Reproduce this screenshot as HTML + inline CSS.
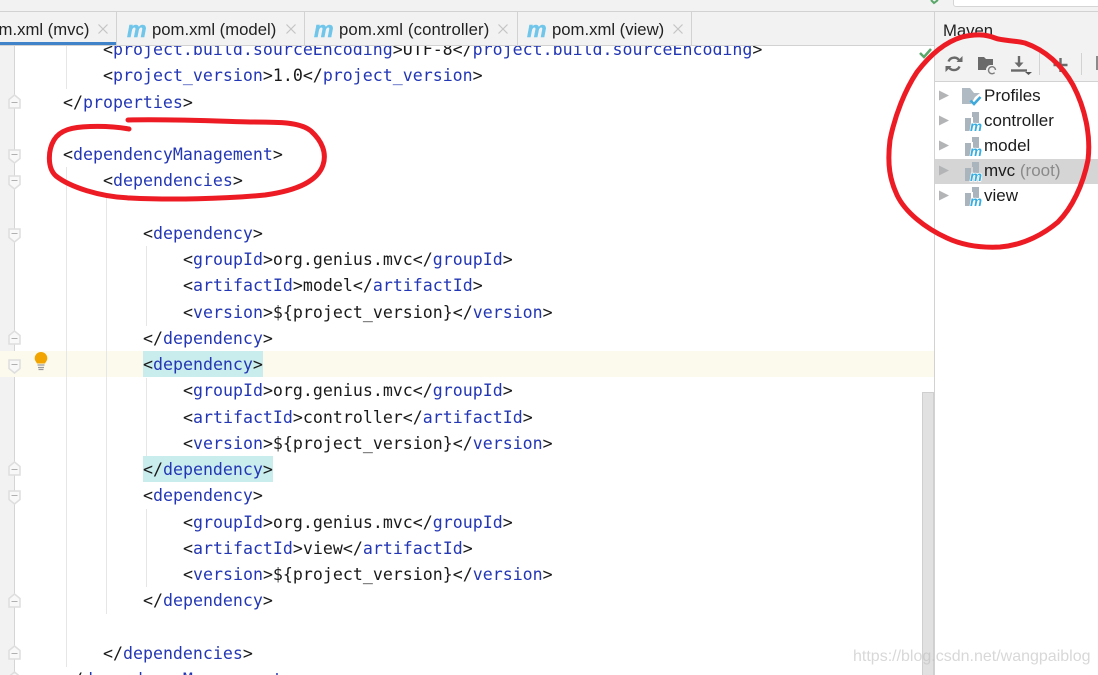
<!DOCTYPE html>
<html><head><meta charset="utf-8">
<style>
html,body{margin:0;padding:0;width:1098px;height:675px;overflow:hidden;background:#fff}
#r{position:relative;width:1098px;height:675px;overflow:hidden;background:#fff}
.a{position:absolute}
.l{position:absolute;height:26px;margin-top:1px;line-height:26px;font-family:"DejaVu Sans Mono","Liberation Mono",monospace;font-size:16.6px;color:#1a1a1a;white-space:pre}
.l b{font-weight:normal;color:#2337b4}
.t{position:absolute;top:12px;height:33px;line-height:36px;font-family:"Liberation Sans",sans-serif;font-size:16.7px;color:#222;white-space:pre}
.m{position:absolute;top:12px;font:italic bold 22px/35px "Liberation Sans",sans-serif;color:#6fc6ea;-webkit-text-stroke:.5px #6fc6ea}
.x{position:absolute;top:24px}
.n{position:absolute;left:984px;height:25px;line-height:25px;font-family:"Liberation Sans",sans-serif;font-size:17px;color:#1c1c1c;white-space:pre}
.g{position:absolute;width:1px;background:#e6e6e6}
</style></head><body><div id="r">

<!-- gutter and caret row -->
<div class="a" style="left:0;top:45px;width:14px;height:630px;background:#f2f2f2"></div>
<div class="a" style="left:14px;top:45px;width:1px;height:630px;background:#d5d5d5"></div>
<div class="a" style="left:0;top:351px;width:935px;height:26px;background:#fcfaed"></div>
<div class="a" style="left:143px;top:351px;width:120px;height:26px;background:#c9ecec"></div>
<div class="a" style="left:143px;top:456px;width:130px;height:26px;background:#c9ecec"></div>

<!-- indent guides -->
<div class="g" style="left:66px;top:45px;height:44px"></div>
<div class="g" style="left:66px;top:167px;height:500px"></div>
<div class="g" style="left:106px;top:194px;height:420px"></div>
<div class="g" style="left:146px;top:246px;height:80px"></div>
<div class="g" style="left:146px;top:378px;height:78px"></div>
<div class="g" style="left:146px;top:509px;height:78px"></div>

<!-- code -->
<div class="l" style="left:103px;top:36px">&lt;<b>project.build.sourceEncoding</b>&gt;UTF-8&lt;/<b>project.build.sourceEncoding</b>&gt;</div>
<div class="l" style="left:103px;top:62px">&lt;<b>project_version</b>&gt;1.0&lt;/<b>project_version</b>&gt;</div>
<div class="l" style="left:63px;top:89px">&lt;/<b>properties</b>&gt;</div>
<div class="l" style="left:63px;top:141px">&lt;<b>dependencyManagement</b>&gt;</div>
<div class="l" style="left:103px;top:167px">&lt;<b>dependencies</b>&gt;</div>
<div class="l" style="left:143px;top:220px">&lt;<b>dependency</b>&gt;</div>
<div class="l" style="left:183px;top:246px">&lt;<b>groupId</b>&gt;org.genius.mvc&lt;/<b>groupId</b>&gt;</div>
<div class="l" style="left:183px;top:272px">&lt;<b>artifactId</b>&gt;model&lt;/<b>artifactId</b>&gt;</div>
<div class="l" style="left:183px;top:299px">&lt;<b>version</b>&gt;${project_version}&lt;/<b>version</b>&gt;</div>
<div class="l" style="left:143px;top:325px">&lt;/<b>dependency</b>&gt;</div>
<div class="l" style="left:143px;top:351px">&lt;<b>dependency</b>&gt;</div>
<div class="l" style="left:183px;top:377px">&lt;<b>groupId</b>&gt;org.genius.mvc&lt;/<b>groupId</b>&gt;</div>
<div class="l" style="left:183px;top:404px">&lt;<b>artifactId</b>&gt;controller&lt;/<b>artifactId</b>&gt;</div>
<div class="l" style="left:183px;top:430px">&lt;<b>version</b>&gt;${project_version}&lt;/<b>version</b>&gt;</div>
<div class="l" style="left:143px;top:456px">&lt;/<b>dependency</b>&gt;</div>
<div class="l" style="left:143px;top:482px">&lt;<b>dependency</b>&gt;</div>
<div class="l" style="left:183px;top:509px">&lt;<b>groupId</b>&gt;org.genius.mvc&lt;/<b>groupId</b>&gt;</div>
<div class="l" style="left:183px;top:535px">&lt;<b>artifactId</b>&gt;view&lt;/<b>artifactId</b>&gt;</div>
<div class="l" style="left:183px;top:561px">&lt;<b>version</b>&gt;${project_version}&lt;/<b>version</b>&gt;</div>
<div class="l" style="left:143px;top:587px">&lt;/<b>dependency</b>&gt;</div>
<div class="l" style="left:103px;top:640px">&lt;/<b>dependencies</b>&gt;</div>
<div class="l" style="left:63px;top:666px">&lt;/<b>dependencyManagement</b>&gt;</div>

<!-- fold markers -->
<svg class="a" style="left:0;top:0" width="40" height="675">
<defs>
<g id="u"><path d="M1 14V5.500L6.500 1 12 5.500V14z" fill="#f8f8f8" stroke="#dedede" stroke-width="1.500"/><path d="M3.500 8.500h6" stroke="#b0b0b0"/></g>
<g id="d"><path d="M1 1v8.500L6.500 14 12 9.500V1z" fill="#f8f8f8" stroke="#dedede" stroke-width="1.500"/><path d="M3.500 5.500h6" stroke="#b0b0b0"/></g>
</defs>
<use href="#u" x="8" y="94"/>
<use href="#d" x="8" y="149"/>
<use href="#d" x="8" y="175"/>
<use href="#d" x="8" y="228"/>
<use href="#u" x="8" y="330"/>
<use href="#d" x="8" y="359"/>
<use href="#u" x="8" y="461"/>
<use href="#d" x="8" y="490"/>
<use href="#u" x="8" y="593"/>
<use href="#u" x="8" y="645"/>
<use href="#u" x="8" y="671"/>
</svg>

<!-- bulb -->
<svg class="a" style="left:33px;top:351px" width="16" height="20">
<path d="M8 1a6.300 6.300 0 0 0-6.300 6.300c0 2.400 1.500 3.600 2.300 5.200h8c.8-1.600 2.300-2.800 2.300-5.200A6.300 6.300 0 0 0 8 1z" fill="#f2a500"/>
<path d="M4.500 14h7M5 16.500h6M5.500 18.500h5" stroke="#9a9a9a" stroke-width="1.300"/>
</svg>

<!-- editor scrollbar -->
<div class="a" style="left:922px;top:392px;width:10px;height:283px;background:#e1e1e1;border:1px solid #cfcfcf;border-bottom:0"></div>

<!-- top bar -->
<div class="a" style="left:0;top:0;width:1098px;height:11px;background:#f2f2f2"></div>
<div class="a" style="left:0;top:11px;width:1098px;height:1px;background:#d2d2d2"></div>
<div class="a" style="left:953px;top:-6px;width:145px;height:11px;background:#fff;border:1px solid #d5d5d5;border-radius:3px"></div>
<svg class="a" style="left:930px;top:0" width="10" height="5"><path d="M1 0l3 3 4-3" stroke="#59a869" stroke-width="2" fill="none"/></svg>

<!-- tabs -->
<div class="a" style="left:0;top:12px;width:935px;height:33px;background:#f2f2f2"></div>
<div class="a" style="left:0;top:45px;width:935px;height:1px;background:#d2d2d2"></div>
<div class="a" style="left:0;top:42px;width:117px;height:3px;background:#4083c9"></div>
<div class="a" style="left:116px;top:12px;width:1px;height:33px;background:#d2d2d2"></div>
<div class="a" style="left:304px;top:12px;width:1px;height:33px;background:#d2d2d2"></div>
<div class="a" style="left:517px;top:12px;width:1px;height:33px;background:#d2d2d2"></div>
<div class="a" style="left:691px;top:12px;width:1px;height:33px;background:#d2d2d2"></div>

<div class="t" style="left:-20px">pom.xml (mvc)</div>
<div class="m" style="left:127px">m</div>
<div class="t" style="left:152px">pom.xml (model)</div>
<div class="m" style="left:314px">m</div>
<div class="t" style="left:339px;letter-spacing:.15px">pom.xml (controller)</div>
<div class="m" style="left:527px">m</div>
<div class="t" style="left:552px">pom.xml (view)</div>
<svg class="x" style="left:98px" width="10" height="10"><path d="M.5.5l9 9M9.500.5l-9 9" stroke="#c4c4c4" stroke-width="1.200"/></svg>
<svg class="x" style="left:286px" width="10" height="10"><path d="M.5.5l9 9M9.500.5l-9 9" stroke="#c4c4c4" stroke-width="1.200"/></svg>
<svg class="x" style="left:498px" width="10" height="10"><path d="M.5.5l9 9M9.500.5l-9 9" stroke="#c4c4c4" stroke-width="1.200"/></svg>
<svg class="x" style="left:673px" width="10" height="10"><path d="M.5.5l9 9M9.500.5l-9 9" stroke="#c4c4c4" stroke-width="1.200"/></svg>

<!-- green check in editor -->
<svg class="a" style="left:918px;top:47px" width="16" height="14"><path d="M2 6l4 4 7-8" stroke="#59a869" stroke-width="2.500" fill="none"/></svg>

<!-- maven panel -->
<div class="a" style="left:935px;top:12px;width:163px;height:69px;background:#f2f2f2"></div>
<div class="a" style="left:934px;top:12px;width:1px;height:663px;background:#d2d2d2"></div>
<div class="a" style="left:935px;top:81px;width:163px;height:1px;background:#d2d2d2"></div>
<div class="a" style="left:935px;top:159px;width:163px;height:25px;background:#d5d5d5"></div>
<div class="a" style="left:943px;top:19px;font:16.7px/24px 'Liberation Sans',sans-serif;color:#222">Maven</div>

<svg class="a" style="left:935px;top:45px" width="163" height="36">
<!-- refresh -->
<path d="M13.500 16.500A6 6 0 0 1 24.500 16M24.500 21.500A6 6 0 0 1 13.500 21.500" fill="none" stroke="#6a6a6a" stroke-width="2.400"/>
<path d="M21.500 17h6v-6zM16.500 21h-6v6z" fill="#6a6a6a"/>
<!-- folder with refresh -->
<path d="M43 12h6l2 2h7v6h-3a5 5 0 0 0-4 5h-8z" fill="#6a6a6a"/>
<path d="M60.500 25a3.500 3.500 0 1 0-.9 2.600" fill="none" stroke="#7e7e7e" stroke-width="1.400"/>
<!-- download -->
<path d="M84 11v10" stroke="#6a6a6a" stroke-width="2.400"/>
<path d="M79.500 17.500l4.500 5 4.500-5z" fill="#6a6a6a"/>
<path d="M76 25.500h16" stroke="#6a6a6a" stroke-width="2.400"/>
<path d="M90 27h7l-3.500 3z" fill="#555"/>
<!-- separators -->
<path d="M104.500 8v22M146.500 8v22" stroke="#d2d2d2"/>
<!-- plus -->
<path d="M125.500 13v14M118.500 20h14" stroke="#6a6a6a" stroke-width="2.400"/>
<path d="M162 11v14" stroke="#8a8a8a" stroke-width="2"/>
</svg>

<!-- tree arrows and icons -->
<svg class="a" style="left:935px;top:82px" width="163" height="130">
<path d="M4 8.500l10 5-10 5zM4 33.500l10 5-10 5zM4 58.500l10 5-10 5zM4 83.500l10 5-10 5zM4 108.500l10 5-10 5z" fill="#b2b4b6"/>
<!-- Profiles folder -->
<path d="M27 6h8l4 5h6l-5 4-4 7h-9z" fill="#afbac2"/>
<path d="M35.500 18.500l3.500 3.500 6.500-7" fill="none" stroke="#3fa9dc" stroke-width="2.600"/>
<defs><g id="mi">
<path d="M7 0h7v11H8V5H7z" fill="#a9b4bc"/>
<path d="M0 6h6v13H0z" fill="#a9b4bc"/>
<path d="M6 11h3v2H6z" fill="#a9b4bc"/>
<text x="5" y="19" font-family="Liberation Sans,sans-serif" font-style="italic" font-weight="bold" font-size="13.500" fill="#35aee2" stroke="#fff" stroke-width="1.400" paint-order="stroke">m</text>
</g></defs>
<use href="#mi" x="30" y="30"/>
<use href="#mi" x="30" y="55"/>
<use href="#mi" x="30" y="80"/>
<use href="#mi" x="30" y="105"/>
</svg>

<div class="n" style="top:83px">Profiles</div>
<div class="n" style="top:108px">controller</div>
<div class="n" style="top:133px">model</div>
<div class="n" style="top:158px">mvc <span style="color:#8a8a8a">(root)</span></div>
<div class="n" style="top:183px">view</div>

<!-- watermark -->
<div class="a" style="left:853px;top:647px;font:16px/20px 'Liberation Sans',sans-serif;color:rgba(190,190,190,.6);white-space:pre">https://blog.csdn.net/wangpaiblog</div>

<!-- red hand-drawn marks -->
<svg class="a" style="left:0;top:0" width="1098" height="675" fill="none" stroke="#ed1c24" stroke-width="5" stroke-linecap="round" stroke-linejoin="round">
<path d="M128 120C170 119 215 121 250 122C280 122 300 122 311 131C322 141 327 153 323 165C318 180 300 190 265 195C225 199 170 200 130 198C100 197 70 187 56 176C47 168 48 150 54 140C60 130 72 127 90 126.500C105 126 118 127 129 129"/>
<path d="M995 38C985 34 975 34 962 37C945 42 930 55 917 72C905 90 895 115 890 140C887 165 890 180 897 195C905 212 925 228 947 238C962 245 980 248 1000 247C1025 245 1045 233 1058 222C1072 208 1083 185 1088 160C1091 135 1085 108 1073 85C1062 65 1045 50 1025 43C1012 40 1003 41 995 38"/>
</svg>

</div></body></html>
